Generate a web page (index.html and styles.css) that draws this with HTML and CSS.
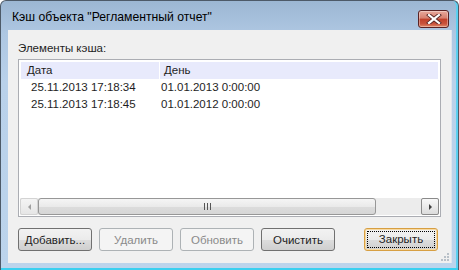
FILE: index.html
```html
<!DOCTYPE html>
<html lang="ru">
<head>
    <meta charset="UTF-8">
    <title>Кэш объекта</title>
    <link rel="stylesheet" href="styles.css">
</head>
<body>
    <div class="window">
        <div class="titlebar">
            <span class="title">Кэш объекта "Регламентный отчет"</span>
            <div class="close-btn">
                <svg width="16" height="10" viewBox="0 0 16 10">
                    <path d="M3 1 L13 9 M13 1 L3 9" stroke="#5a2a28" stroke-width="4" stroke-linecap="square"/>
                    <path d="M3 1 L13 9 M13 1 L3 9" stroke="#ffffff" stroke-width="2.2" stroke-linecap="square"/>
                </svg>
            </div>
        </div>
        <div class="client">
            <div class="label">Элементы кэша:</div>
            <div class="listbox">
                <div class="list-header">
                    <div class="col col-date">Дата</div>
                    <div class="col col-day">День</div>
                </div>
                <div class="list-row">
                    <div class="cell cell-date">25.11.2013 17:18:34</div>
                    <div class="cell cell-day">01.01.2013 0:00:00</div>
                </div>
                <div class="list-row">
                    <div class="cell cell-date">25.11.2013 17:18:45</div>
                    <div class="cell cell-day">01.01.2012 0:00:00</div>
                </div>
                <div class="list-space"></div>
                <div class="hscroll">
                    <div class="sb-btn sb-left"><span class="arrow-left"></span></div>
                    <div class="sb-thumb"><span class="grip"></span></div>
                    <div class="sb-track"></div>
                    <div class="sb-btn sb-right"><span class="arrow-right"></span></div>
                </div>
            </div>
            <div class="buttons">
                <button class="btn">Добавить...</button>
                <button class="btn" disabled>Удалить</button>
                <button class="btn" disabled>Обновить</button>
                <button class="btn">Очистить</button>
                <button class="btn btn-default"><span class="focus">Закрыть</span></button>
            </div>
            <div class="size-grip">
                <svg width="10" height="10" viewBox="0 0 10 10">
                    <rect x="7" y="1" width="2" height="2" fill="#b8c0c8"/>
                    <rect x="4" y="4" width="2" height="2" fill="#b8c0c8"/>
                    <rect x="7" y="4" width="2" height="2" fill="#b8c0c8"/>
                    <rect x="1" y="7" width="2" height="2" fill="#b8c0c8"/>
                    <rect x="4" y="7" width="2" height="2" fill="#b8c0c8"/>
                    <rect x="7" y="7" width="2" height="2" fill="#b8c0c8"/>
                </svg>
            </div>
        </div>
        <div class="bottom-frame"></div>
    </div>
</body>
</html>
```

FILE: styles.css
```css
body {
    margin: 0;
    background: #ffffff;
    font-family: 'Liberation Sans', Arial, sans-serif;
}

.window {
    width: 459px;
    height: 270px;
    box-sizing: border-box;
    border: 1px solid #4d5a68;
    border-bottom: none;
    border-radius: 6px 6px 0 0;
    background: linear-gradient(180deg, #9cb7d3 0%, #aec7e2 12%, #b9d1ea 30%, #bcd4ec 100%);
    display: flex;
    flex-direction: column;
    position: relative;
    overflow: hidden;
    box-shadow: inset -3px 0 0 -1px #5cd0f0;
}

.titlebar {
    height: 29px;
    display: flex;
    align-items: flex-start;
    justify-content: space-between;
    padding: 0 9px 0 11px;
}

.title {
    font-size: 12.2px;
    color: #000;
    margin-top: 9px;
}

.close-btn {
    margin-top: 9px;
    width: 29px;
    height: 16px;
    border: 1px solid #5a2223;
    border-radius: 3px;
    background: linear-gradient(180deg, #e8a99c 0%, #d77f6e 45%, #c0402a 50%, #c9533c 80%, #e08a6a 100%);
    display: flex;
    align-items: center;
    justify-content: center;
    box-shadow: inset 0 0 0 1px rgba(255, 255, 255, 0.35);
}

.client {
    margin: 0 6px 0 7px;
    height: 233px;
    background: #f0f0f0;
    border-right: 1px solid #dfe6ee;
    padding: 12px 10px 0 10px;
    box-sizing: border-box;
    display: flex;
    flex-direction: column;
    position: relative;
}

.label {
    font-size: 11.5px;
    color: #1e1e1e;
    height: 17px;
}

.listbox {
    height: 158px;
    border: 1px solid #abadb3;
    background: #fff;
    padding: 2px 1px 1px 2px;
    box-sizing: border-box;
    display: flex;
    flex-direction: column;
    font-size: 11.5px;
    color: #1e1e1e;
}

.list-header {
    display: flex;
    height: 17px;
    background: #e8eafc;
    margin-right: 1px;
}

.col {
    line-height: 17px;
}

.col-date {
    width: 132px;
    padding-left: 6px;
    border-right: 1px solid #ffffff;
}

.col-day {
    padding-left: 4px;
}

.list-row {
    display: flex;
    height: 17px;
    line-height: 17px;
}

.cell-date {
    width: 130px;
    padding-left: 10px;
}

.list-space {
    flex: 1;
}

.hscroll {
    height: 17px;
    display: flex;
    background: #ececec;
    margin-left: -1px;
}

.sb-btn {
    width: 18px;
    height: 17px;
    box-sizing: border-box;
    border: 1px solid #d3d3d3;
    border-radius: 2px;
    background: linear-gradient(180deg, #f4f4f4, #e6e6e6);
    display: flex;
    align-items: center;
    justify-content: center;
}

.sb-right {
    border-color: #8a8a8a;
    background: linear-gradient(180deg, #f8f8f8, #dcdcdc);
}

.arrow-left {
    width: 0;
    height: 0;
    border-top: 3px solid transparent;
    border-bottom: 3px solid transparent;
    border-right: 3px solid #a0a0a0;
}

.arrow-right {
    width: 0;
    height: 0;
    border-top: 3px solid transparent;
    border-bottom: 3px solid transparent;
    border-left: 3px solid #404040;
}

.sb-thumb {
    width: 338px;
    box-sizing: border-box;
    border: 1px solid #979797;
    border-radius: 3px;
    background: linear-gradient(180deg, #f5f5f5 0%, #eaeaea 50%, #dcdcdc 51%, #d6d6d6 100%);
    display: flex;
    align-items: center;
    justify-content: center;
}

.grip {
    width: 7px;
    height: 7px;
    background: repeating-linear-gradient(90deg, #555 0 1px, transparent 1px 3px);
}

.sb-track {
    flex: 1;
}

.buttons {
    display: flex;
    margin-top: 11px;
    gap: 7px;
}

.btn {
    width: 74px;
    height: 23px;
    box-sizing: border-box;
    border: 1px solid #707070;
    border-radius: 3px;
    background: linear-gradient(180deg, #f2f2f2 0%, #ebebeb 50%, #dddddd 51%, #cfcfcf 100%);
    font-family: 'Liberation Sans', Arial, sans-serif;
    font-size: 11.5px;
    font-weight: normal;
    color: #1e1e1e;
    padding: 0;
}

.btn:disabled {
    border-color: #adb2b5;
    background: #f4f4f4;
    color: #8a8a8a;
}

.btn:nth-child(4) {
    margin-right: 22px;
}

.btn-default {
    border-color: #d79f42;
    padding: 2px;
    box-shadow: inset 0 0 0 1px #f8d9a0;
}

.focus {
    display: block;
    height: 17px;
    line-height: 15px;
    box-sizing: border-box;
    border: 1px dotted #000;
}

.size-grip {
    position: absolute;
    right: 1px;
    bottom: 1px;
    line-height: 0;
}

.bottom-frame {
    flex: 1;
    border-bottom: 2px solid #3ad0f0;
}
```
